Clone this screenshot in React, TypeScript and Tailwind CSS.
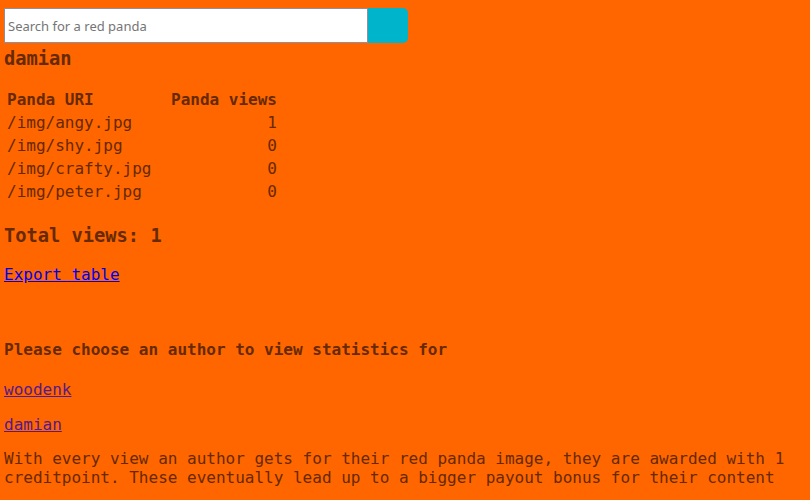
const rows = [
  { uri: "/img/angy.jpg", views: 1 },
  { uri: "/img/shy.jpg", views: 0 },
  { uri: "/img/crafty.jpg", views: 0 },
  { uri: "/img/peter.jpg", views: 0 },
];

export default function App() {
  return (
    <div className="min-h-[500px] bg-[#ff6600] px-[4px] pt-[8px] pb-4 text-[16px] leading-[normal] text-[#662900] [font-family:'DejaVu_Sans_Mono',monospace]">
      <form className="flex" onSubmit={(e) => e.preventDefault()}>
        <input
          type="text"
          placeholder="Search for a red panda"
          className="h-[35px] w-[364px] border border-[#8f8f9d] bg-white px-[3px] text-[13px] text-black outline-none placeholder:text-[#757575] [font-family:'Noto_Sans',sans-serif]"
        />
        <button type="submit" className="h-[35px] w-[40px] rounded-r-[5px] bg-[#00b4cc]" />
      </form>

      <h3 className="mt-[5px] mb-[17.7px] text-[18.72px] leading-[normal] font-bold">damian</h3>

      <table className="border-separate border-spacing-[2px]">
        <thead>
          <tr>
            <th className="w-[162px] p-[1px] text-left font-bold">Panda URI</th>
            <th className="p-[1px] text-left font-bold">Panda views</th>
          </tr>
        </thead>
        <tbody>
          {rows.map((r) => (
            <tr key={r.uri}>
              <td className="p-[1px]">{r.uri}</td>
              <td className="p-[1px] text-right">{r.views}</td>
            </tr>
          ))}
        </tbody>
      </table>

      <h3 className="mt-[21px] mb-[19.7px] text-[18.72px] leading-[normal] font-bold">Total views: 1</h3>

      <a href="#" className="text-[#0000ee] underline">Export table</a>

      <h4 className="mt-[56px] mb-[20.3px] font-bold">Please choose an author to view statistics for</h4>

      <p className="mb-[16px]">
        <a href="#" className="text-[#551a8b] underline">woodenk</a>
      </p>
      <p className="mb-[15px]">
        <a href="#" className="text-[#551a8b] underline">damian</a>
      </p>
      <p>
        With every view an author gets for their red panda image, they are awarded with 1 creditpoint. These eventually lead up to a bigger payout bonus for their content
      </p>
    </div>
  );
}
